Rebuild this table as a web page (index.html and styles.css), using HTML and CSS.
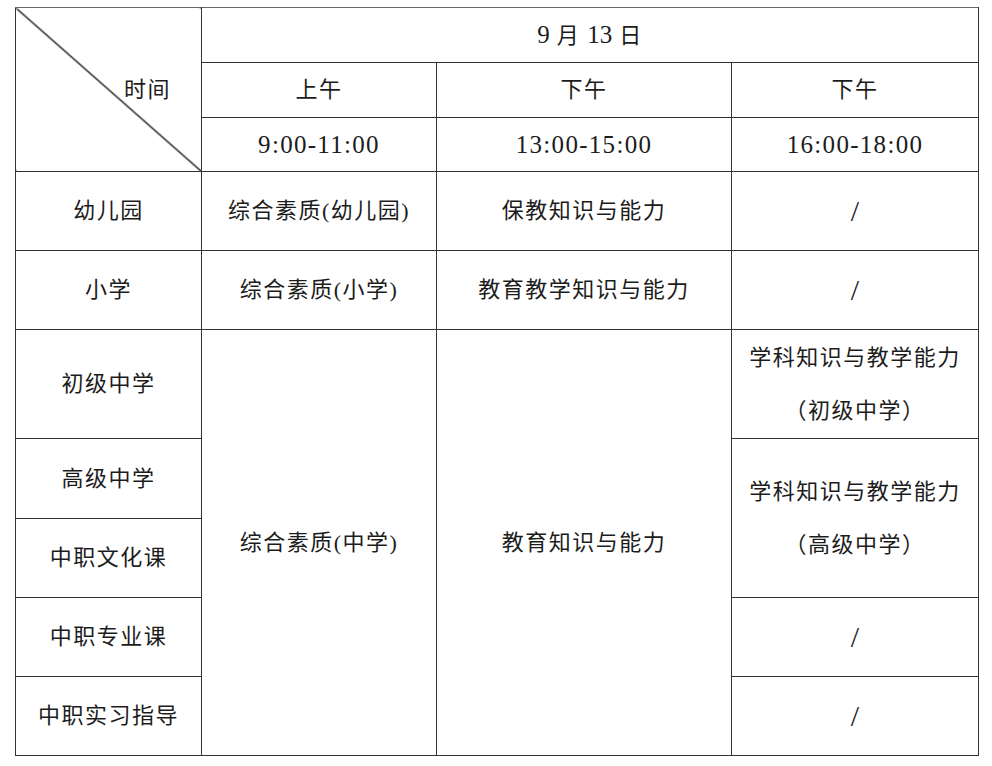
FILE: index.html
```html
<!DOCTYPE html>
<html lang="zh-CN">
<head>
<meta charset="utf-8">
<title>考试时间安排</title>
<link rel="stylesheet" href="styles.css">
</head>
<body>
<table class="sched">
  <colgroup>
    <col class="c1"><col class="c2"><col class="c3"><col class="c4">
  </colgroup>
  <tr class="r55">
    <td class="diag" rowspan="3">时间</td>
    <td colspan="3"><span class="num">9</span> 月 <span class="num">13</span> 日</td>
  </tr>
  <tr class="r55">
    <td>上午</td>
    <td>下午</td>
    <td>下午</td>
  </tr>
  <tr class="r54">
    <td class="num">9:00-11:00</td>
    <td class="num">13:00-15:00</td>
    <td class="num">16:00-18:00</td>
  </tr>
  <tr class="r79">
    <td>幼儿园</td>
    <td>综合素质(幼儿园)</td>
    <td>保教知识与能力</td>
    <td class="slash">/</td>
  </tr>
  <tr class="r79">
    <td>小学</td>
    <td>综合素质(小学)</td>
    <td>教育教学知识与能力</td>
    <td class="slash">/</td>
  </tr>
  <tr class="r109">
    <td>初级中学</td>
    <td rowspan="5">综合素质(中学)</td>
    <td rowspan="5">教育知识与能力</td>
    <td class="two">学科知识与教学能力<br>（初级中学）</td>
  </tr>
  <tr class="r80">
    <td>高级中学</td>
    <td class="two" rowspan="2">学科知识与教学能力<br>（高级中学）</td>
  </tr>
  <tr class="r79">
    <td>中职文化课</td>
  </tr>
  <tr class="r79">
    <td>中职专业课</td>
    <td class="slash">/</td>
  </tr>
  <tr class="r79">
    <td>中职实习指导</td>
    <td class="slash">/</td>
  </tr>
</table>
</body>
</html>
```
FILE: styles.css
```css
html, body {
  margin: 0;
  padding: 0;
  background: #ffffff;
}

body {
  padding: 7px 0 0 15px;
  font-family: "Liberation Serif", "Noto Sans CJK SC", serif;
  color: #1c1c1c;
}

.sched {
  border-collapse: collapse;
  table-layout: fixed;
  width: 963px;
}

.c1 { width: 186px; }
.c2 { width: 235px; }
.c3 { width: 295px; }
.c4 { width: 247px; }

.sched td {
  border: 1px solid #333333;
  padding: 0;
  text-align: center;
  vertical-align: middle;
  font-size: 22px;
  letter-spacing: 1.5px;
  line-height: 26px;
}

.sched tr:first-child td {
  border-top-color: #6a6a6a;
}

.r55 { height: 55px; }
.r54 { height: 54px; }
.r79 { height: 79px; }
.r80 { height: 80px; }
.r109 { height: 109px; }

.num {
  font-size: 25px;
  letter-spacing: 0;
}

.sched td.num {
  font-size: 25px;
  letter-spacing: 1.3px;
}

.sched td.slash {
  font-size: 30px;
  letter-spacing: 0;
}

.sched td.two {
  line-height: 53px;
}

.sched td.diag {
  text-align: right;
  padding-right: 30px;
  background: linear-gradient(to top right,
    transparent calc(50% - 1.1px),
    #222222 calc(50% - 0.35px),
    #222222 calc(50% + 0.35px),
    transparent calc(50% + 1.1px));
}
```
